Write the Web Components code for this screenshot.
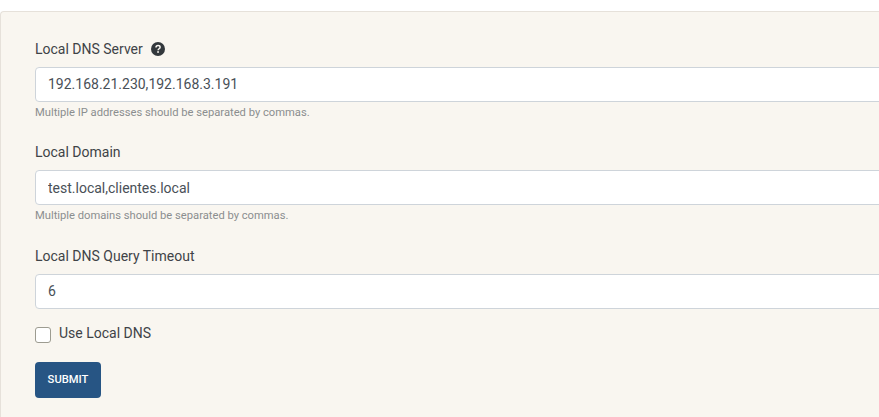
<!DOCTYPE html>
<html>
<head>
<meta charset="utf-8">
<style>
  html, body { margin: 0; height: 417px; overflow: hidden; background: #fff; font-family: Roboto, sans-serif; color: #343a40; }
</style>
</head>
<body>
<dns-panel>
  <form-field label="Local DNS Server" value="192.168.21.230,192.168.3.191" help="Multiple IP addresses should be separated by commas." info></form-field>
  <form-field label="Local Domain" value="test.local,clientes.local" help="Multiple domains should be separated by commas."></form-field>
  <form-field label="Local DNS Query Timeout" value="6"></form-field>
  <check-field label="Use Local DNS"></check-field>
  <submit-button>SUBMIT</submit-button>
</dns-panel>

<script>
class DnsPanel extends HTMLElement {
  constructor() {
    super();
    this.attachShadow({ mode: 'open' });
    this.shadowRoot.innerHTML = `
      <style>
        :host { display: block; margin-top: 11px; height: 406px; box-sizing: border-box;
          background: #f9f6f0; border: 1px solid #e6e1da; border-right: 0; border-bottom: 0;
          border-top-left-radius: 4px; padding: 24.75px 0 0 34px; overflow: hidden; }
      </style>
      <slot></slot>`;
  }
}

class FormField extends HTMLElement {
  static get observedAttributes() {
    return ['label', 'value', 'help', 'info'];
  }

  constructor() {
    super();
    this.attachShadow({ mode: 'open' });
  }

  connectedCallback() {
    this.render();
  }

  attributeChangedCallback() {
    if (this.shadowRoot) this.render();
  }

  render() {
    const label = this.getAttribute('label') || '';
    const value = this.getAttribute('value') || '';
    const help = this.getAttribute('help');
    const info = this.hasAttribute('info');

    this.shadowRoot.innerHTML = `
      <style>
        :host { display: block; width: 1000px; margin-bottom: 22.5px; }
        .label { display: flex; align-items: center; gap: 8px; height: 24px; margin-bottom: 6px;
          font-size: 14px; line-height: 24px; color: #3f4347; }
        .label svg { display: block; }
        input { display: block; width: 100%; height: 35px; box-sizing: border-box; margin: 0;
          padding: 0 12px; border: 1px solid #ced4da; border-radius: 4px; background: #fff;
          font: 14px Roboto, sans-serif; color: #495057; outline: 0; }
        .help { height: 13px; margin-top: 4px; margin-bottom: -1px; font-size: 11.2px; line-height: 13px;
          color: #8b8e8f; }
      </style>
      <div class="label">${label}${info ? `
        <svg width="14" height="14" viewBox="0 0 14 14"><circle cx="7" cy="7" r="7" fill="#33383c"/>
          <path d="M5 5.4C5 4.2 5.9 3.5 7.1 3.5c1.2 0 2 .7 2 1.7 0 1.6-2 1.5-2 3" fill="none" stroke="#f9f6f0" stroke-width="1.5"/>
          <rect x="6.2" y="9.2" width="1.7" height="1.6" fill="#f9f6f0"/></svg>` : ''}</div>
      <input type="text" value="${value}">
      ${help ? `<div class="help">${help}</div>` : ''}`;
  }
}

class CheckField extends HTMLElement {
  constructor() {
    super();
    this.attachShadow({ mode: 'open' });
  }

  connectedCallback() {
    this.shadowRoot.innerHTML = `
      <style>
        :host { display: flex; align-items: flex-start; gap: 8px; height: 38px; margin-top: -7px; }
        .box { width: 16px; height: 16px; margin-top: 3px; }
        .box span { display: block; width: 16px; height: 16px; box-sizing: border-box; background: #fff;
          border: 1px solid #9d9c91; border-radius: 3px; }
        .text { font-size: 14px; line-height: 20px; margin-top: -1px; color: #3f4347; }
      </style>
      <div class="box"><span></span></div>
      <div class="text">${this.getAttribute('label') || ''}</div>`;
  }
}

class SubmitButton extends HTMLElement {
  constructor() {
    super();
    this.attachShadow({ mode: 'open' });
    this.shadowRoot.innerHTML = `
      <style>
        :host { display: block; }
        button { display: block; width: 66px; height: 36px; margin: 0; padding: 0 0 1px; border: 0;
          border-radius: 4px; background: #275584; color: #fff;
          font: 500 11.2px Roboto, sans-serif; }
      </style>
      <button type="button"><slot></slot></button>`;
  }
}

customElements.define('dns-panel', DnsPanel);
customElements.define('form-field', FormField);
customElements.define('check-field', CheckField);
customElements.define('submit-button', SubmitButton);
</script>
</body>
</html>
